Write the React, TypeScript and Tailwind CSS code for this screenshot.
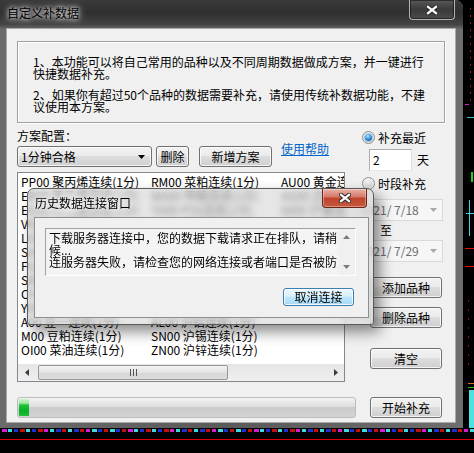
import React from "react";

const FONT = "font-['Noto_Sans_CJK_SC','Noto_Sans_CJK_JP',sans-serif]";
const BTN =
  "flex items-center justify-center rounded-[3px] border border-[#707070] bg-[linear-gradient(#f2f2f2_0%,#ebebeb_45%,#dddddd_50%,#cfcfcf_100%)] text-[12px] leading-[12px] text-black shadow-[inset_0_0_0_1px_rgba(255,255,255,0.75)]";

const col1 = [
  "PP00 聚丙烯连续(1分)",
  "EB00 苯乙烯连续(1分)",
  "EG00 乙二醇连续(1分)",
  "V00 PVC连续(1分)",
  "L00 塑料连续(1分)",
  "SA00 纯碱连续(1分)",
  "FG00 玻璃连续(1分)",
  "SR00 白糖连续(1分)",
  "CF00 棉花连续(1分)",
  "Y00 豆油连续(1分)",
  "A00 豆一连续(1分)",
  "M00 豆粕连续(1分)",
  "OI00 菜油连续(1分)",
];
const col2 = [
  "RM00 菜粕连续(1分)",
  "MA00 甲醇连续(1分)",
  "TA00 PTA连续(1分)",
  "RU00 橡胶连续(1分)",
  "BU00 沥青连续(1分)",
  "RB00 螺纹连续(1分)",
  "HC00 热卷连续(1分)",
  "I00 铁矿连续(1分)",
  "J00 焦炭连续(1分)",
  "CU00 沪铜连续(1分)",
  "AL00 沪铝连续(1分)",
  "SN00 沪锡连续(1分)",
  "ZN00 沪锌连续(1分)",
];
const col3 = [
  "AU00 黄金连续(1分)",
  "AG00 白银连续(1分)",
  "NI00 沪镍连续(1分)",
  "PB00 沪铅连续(1分)",
  "FU00 燃油连续(1分)",
  "SC00 原油连续(1分)",
  "JM00 焦煤连续(1分)",
  "P00 棕榈连续(1分)",
  "C00 玉米连续(1分)",
  "JD00 鸡蛋连续(1分)",
];

function XGlyph() {
  return (
    <svg width="12" height="10" viewBox="0 0 12 10">
      <path d="M2 1.8 L10 8.2 M10 1.8 L2 8.2" stroke="#2a2a2a" strokeWidth="4.2" strokeLinecap="square" />
      <path d="M2 1.8 L10 8.2 M10 1.8 L2 8.2" stroke="#ffffff" strokeWidth="2.2" strokeLinecap="square" />
    </svg>
  );
}

function Tri({ dir, color = "#000" }: { dir: "down" | "up" | "left" | "right"; color?: string }) {
  const d =
    dir === "down"
      ? "M0 0 L7 0 L3.5 4 Z"
      : dir === "up"
      ? "M0 4 L7 4 L3.5 0 Z"
      : dir === "left"
      ? "M4 0 L4 7 L0 3.5 Z"
      : "M0 0 L0 7 L4 3.5 Z";
  const w = dir === "down" || dir === "up" ? 7 : 4;
  const h = dir === "down" || dir === "up" ? 4 : 7;
  return (
    <svg width={w} height={h} viewBox={`0 0 ${w} ${h}`}>
      <path d={d} fill={color} />
    </svg>
  );
}

function Radio({ checked }: { checked?: boolean }) {
  return (
    <div className="flex h-[13px] w-[13px] shrink-0 items-center justify-center rounded-full border border-[#8e8f8f] bg-[radial-gradient(circle_at_50%_35%,#ffffff,#d4d4d4)]">
      {checked ? (
        <div className="h-[7px] w-[7px] rounded-full bg-[radial-gradient(circle_at_40%_30%,#b5e4ff,#2b86d6_55%,#0b3f85)] shadow-[0_0_0_1px_#9fc7e6]" />
      ) : (
        <div className="h-[7px] w-[7px] rounded-full bg-[radial-gradient(circle_at_40%_30%,#f4f4f4,#c8c8c8)]" />
      )}
    </div>
  );
}

function HScroll() {
  return (
    <div className="flex h-[17px] items-center bg-[linear-gradient(#e5e5e5,#f0f0f0)]">
      <div className="flex h-full w-[17px] items-center justify-center">
        <Tri dir="left" color="#3c3c3c" />
      </div>
      <div className="ml-[3px] flex h-[15px] w-[190px] items-center justify-center rounded-[2px] border border-[#979797] bg-[linear-gradient(#f3f3f3,#e4e4e4_50%,#d6d6d6_51%,#dcdcdc)]">
        <div className="flex gap-[2px]">
          <div className="h-[7px] w-px bg-[#555]" />
          <div className="h-[7px] w-px bg-[#555]" />
          <div className="h-[7px] w-px bg-[#555]" />
        </div>
      </div>
      <div className="flex-1" />
      <div className="flex h-full w-[17px] items-center justify-center">
        <Tri dir="right" color="#3c3c3c" />
      </div>
    </div>
  );
}

function ListBox() {
  return (
    <div className="mt-[5px] flex h-[210px] w-[328px] flex-col border border-[#828790] bg-white">
      <div className="flex flex-1 overflow-hidden pl-[3px] pt-[2px]">
        {[col1, col2, col3].map((c, i) => (
          <div key={i} className="flex w-[130px] shrink-0 flex-col">
            {c.map((t) => (
              <div key={t} className="h-[14px] whitespace-nowrap text-[12px] leading-[14px] text-black">
                {t}
              </div>
            ))}
          </div>
        ))}
      </div>
      <HScroll />
    </div>
  );
}

function DateBox({ text }: { text: string }) {
  return (
    <div className="flex h-[22px] w-[87px] items-center justify-between border border-[#d9d9d9] bg-[#f6f6f6] pl-[3px] pr-[5px] text-[12px] leading-[12px] text-[#6d6d6d]">
      <span className="whitespace-pre">{text}</span>
      <Tri dir="down" color="#a8a8a8" />
    </div>
  );
}

function Dialog() {
  return (
    <div className="absolute left-[27px] top-[188px] flex h-[137px] w-[347px] flex-col rounded-t-[7px] rounded-b-[3px] border border-[#5a5a5a] bg-[rgba(214,214,214,0.62)] shadow-[6px_7px_14px_rgba(0,0,0,0.45)] backdrop-blur-[3px]">
      <div className="flex h-[28px] items-start justify-between">
        <span className="pl-[7px] pt-[8px] text-[12px] leading-[12px] text-black [text-shadow:0_0_4px_#fff,0_0_8px_#fff]">
          历史数据连接窗口
        </span>
        <div className="mr-[6px] flex h-[19px] w-[45px] items-center justify-center rounded-b-[4px] border border-t-0 border-[#6a2418] bg-[linear-gradient(#eab3a6_0%,#d47766_45%,#c0432c_50%,#c65a3e_100%)] shadow-[inset_0_0_0_1px_rgba(255,255,255,0.35)]">
          <XGlyph />
        </div>
      </div>
      <div className="ml-[6px] mr-[4px] flex h-[101px] flex-col border border-[#8e8e8e] bg-[#f0f0f0] pl-[10px] pt-[10px]">
        <div className="flex h-[48px] w-[311px] border border-t-[#a0a0a0] border-l-[#a0a0a0] border-r-white border-b-white bg-[#f4f4f4]">
          <div className="flex-1 overflow-hidden pl-[3px] pt-[3px] text-[12px] leading-[12px] text-black">
            <div className="whitespace-nowrap">下载服务器连接中，您的数据下载请求正在排队，请稍</div>
            <div className="whitespace-nowrap">候...</div>
            <div className="whitespace-nowrap">连服务器失败，请检查您的网络连接或者端口是否被防火墙阻止。</div>
          </div>
          <div className="flex w-[17px] flex-col items-center justify-between bg-[#f0f0f0] py-[6px]">
            <Tri dir="up" color="#7a7a7a" />
            <Tri dir="down" color="#7a7a7a" />
          </div>
        </div>
        <div className="mr-[14px] mt-[12px] flex h-[18px] w-[71px] items-center justify-center self-end rounded-[3px] border border-[#3c7fb1] bg-[linear-gradient(#eaf6fd_0%,#d9f0fc_45%,#bee6fd_50%,#a7d9f5_100%)] text-[12px] leading-[12px] text-black shadow-[inset_0_0_0_1px_rgba(255,255,255,0.8)]">
          取消连接
        </div>
      </div>
    </div>
  );
}

function Client() {
  return (
    <div className="flex w-[448px] flex-col bg-[#f0f0f0] text-black shadow-[0_0_0_1px_#a9a9a9]">
      <div className="ml-[10px] mt-[12px] flex h-[82px] w-[428px] flex-col gap-[9px] border border-[#a0a0a0] pl-[15px] pt-[14px] text-[12px] leading-[12px] shadow-[inset_1px_1px_0_#fff,1px_1px_0_#fff]">
        <div>
          <div className="whitespace-nowrap">1、本功能可以将自己常用的品种以及不同周期数据做成方案，并一键进行</div>
          <div className="whitespace-nowrap">快捷数据补充。</div>
        </div>
        <div>
          <div className="whitespace-nowrap">2、如果你有超过50个品种的数据需要补充，请使用传统补数据功能，不建</div>
          <div className="whitespace-nowrap">议使用本方案。</div>
        </div>
      </div>
      <div className="flex pl-[10px]">
        <div className="flex w-[339px] flex-col">
          <div className="mt-[7px] text-[12px] leading-[12px]">方案配置：</div>
          <div className="mt-[4px] flex h-[21px] items-start">
            <div className="flex h-[21px] w-[135px] items-center justify-between rounded-[3px] border border-[#707070] bg-[linear-gradient(#f2f2f2_0%,#ebebeb_45%,#dddddd_50%,#cfcfcf_100%)] pl-[3px] pr-[6px] text-[12px] leading-[12px] shadow-[inset_0_0_0_1px_rgba(255,255,255,0.75)]">
              <span>1分钟合格</span>
              <Tri dir="down" color="#000" />
            </div>
            <div className={`ml-[4px] h-[21px] w-[33px] ${BTN}`}>删除</div>
            <div className={`ml-[10px] h-[21px] w-[73px] ${BTN}`}>新增方案</div>
            <span className="-mt-[3px] ml-[9px] text-[12px] leading-[12px] text-[#0066cc] underline">使用帮助</span>
          </div>
          <ListBox />
          <div className="mt-[15px] flex h-[21px] w-[339px] rounded-[3px] border border-[#bcbcbc] bg-[linear-gradient(#f3f3f3,#dedede_45%,#cbcbcb_50%,#d3d3d3)] p-px">
            <div className="h-full w-[10px] rounded-l-[1px] bg-[linear-gradient(#c8f5c8_0%,#9be89b_25%,#1fc23a_35%,#06b025_70%,#22c03a_100%)]" />
          </div>
        </div>
        <div className="flex w-[87px] flex-col">
          <div className="mt-[8px] flex h-[13px] items-center gap-[3px] pl-[6px] text-[12px] leading-[12px]">
            <Radio checked />
            <span className="whitespace-nowrap">补充最近</span>
          </div>
          <div className="mt-[5px] flex items-center pl-[13px]">
            <div className="flex h-[22px] w-[43px] items-center border border-[#abadb3] border-b-[#e3e9ef] border-r-[#dbdfe6] bg-white pl-[3px] text-[12px] leading-[12px]">
              2
            </div>
            <span className="ml-[5px] text-[12px] leading-[12px]">天</span>
          </div>
          <div className="mt-[6px] flex h-[13px] items-center gap-[3px] pl-[6px] text-[12px] leading-[12px]">
            <Radio />
            <span className="whitespace-nowrap">时段补充</span>
          </div>
          <div className="mt-[9px]">
            <DateBox text="2021/ 7/18" />
          </div>
          <div className="mt-[3px] h-[12px] pl-[24px] text-[12px] leading-[12px]">至</div>
          <div className="mt-[4px]">
            <DateBox text="2021/ 7/29" />
          </div>
          <div className={`ml-[14px] mt-[15px] h-[21px] w-[72px] ${BTN}`}>添加品种</div>
          <div className={`ml-[14px] mt-[9px] h-[21px] w-[72px] ${BTN}`}>删除品种</div>
          <div className={`ml-[14px] mt-[20px] h-[21px] w-[72px] ${BTN}`}>清空</div>
          <div className={`ml-[14px] mt-[28px] h-[21px] w-[72px] ${BTN}`}>开始补充</div>
        </div>
      </div>
    </div>
  );
}

function Window() {
  return (
    <div className="relative flex w-[463px] flex-col rounded-tl-[4px] rounded-tr-[8px] bg-[linear-gradient(90deg,#6a6a6a,#5a5a5a_50%,#6e6e6e)]">
      <div className="flex h-[29px] items-start justify-between rounded-tr-[8px] bg-[linear-gradient(#3a3a3a,#2f2f2f_45%,#444444_85%,#6a6a6a)]">
        <span className="pl-[7px] pt-[7px] text-[12px] leading-[12px] text-black [text-shadow:0_0_4px_#fff,0_0_9px_#fff]">
          自定义补数据
        </span>
        <div className="mr-[8px] flex h-[20px] w-[46px] items-center justify-center rounded-b-[4px] border border-t-0 border-[#b5b5b5] bg-[linear-gradient(#5a5a5a,#3a3a3a_50%,#4c4c4c)] shadow-[inset_0_0_0_1px_rgba(0,0,0,0.5)]">
          <XGlyph />
        </div>
      </div>
      <div className="flex h-[393px]">
        <div className="w-[7px]" />
        <Client />
        <div className="w-[8px]" />
      </div>
      <div className="h-[6px]" />
      <Dialog />
    </div>
  );
}

function RightChart() {
  return (
    <svg width="11" height="428" viewBox="0 0 11 428" className="block">
      {Array.from({ length: 14 }).map((_, i) => (
        <rect key={i} x="7" y={8 + i * 7} width="1" height="2" fill="#b01010" />
      ))}
      <rect x="2" y="104" width="4" height="1" fill="#d020d0" />
      <rect x="4" y="117" width="7" height="1" fill="#30c8c8" />
      <rect x="8" y="172" width="2" height="10" fill="#20d020" />
      <rect x="6" y="200" width="1" height="36" fill="#40d0e0" />
      <rect x="3" y="213" width="8" height="1" fill="#40d0e0" />
      <rect x="2" y="248" width="9" height="1" fill="#e01010" />
      <rect x="2" y="266" width="9" height="1" fill="#e01010" />
      {Array.from({ length: 8 }).map((_, i) => (
        <rect key={`b${i}`} x="5" y={300 + i * 9} width="1" height="2" fill="#901010" />
      ))}
      <rect x="5" y="383" width="6" height="1" fill="#d07020" />
      <rect x="5" y="387" width="6" height="1" fill="#20c020" />
      <rect x="6" y="390" width="5" height="38" fill="#50e0e0" />
    </svg>
  );
}

function BottomChart() {
  const colors = ["#d020d0", "#40d8e0", "#2030d0", "#c01010", "#40d8e0", "#2030d0", "#c01010"];
  return (
    <svg width="474" height="25" viewBox="0 0 474 25" className="block">
      {Array.from({ length: 80 }).map((_, i) => (
        <rect key={i} x={2 + i * 6} y="1" width={i % 3 === 0 ? 5 : 4} height="3" fill={colors[i % colors.length]} />
      ))}
      <rect x="0" y="11" width="474" height="1" fill="#e00000" />
    </svg>
  );
}

export default function App() {
  return (
    <div className={`flex h-[453px] w-[474px] flex-col overflow-hidden bg-black ${FONT}`}>
      <div className="flex h-[428px]">
        <Window />
        <RightChart />
      </div>
      <BottomChart />
    </div>
  );
}
